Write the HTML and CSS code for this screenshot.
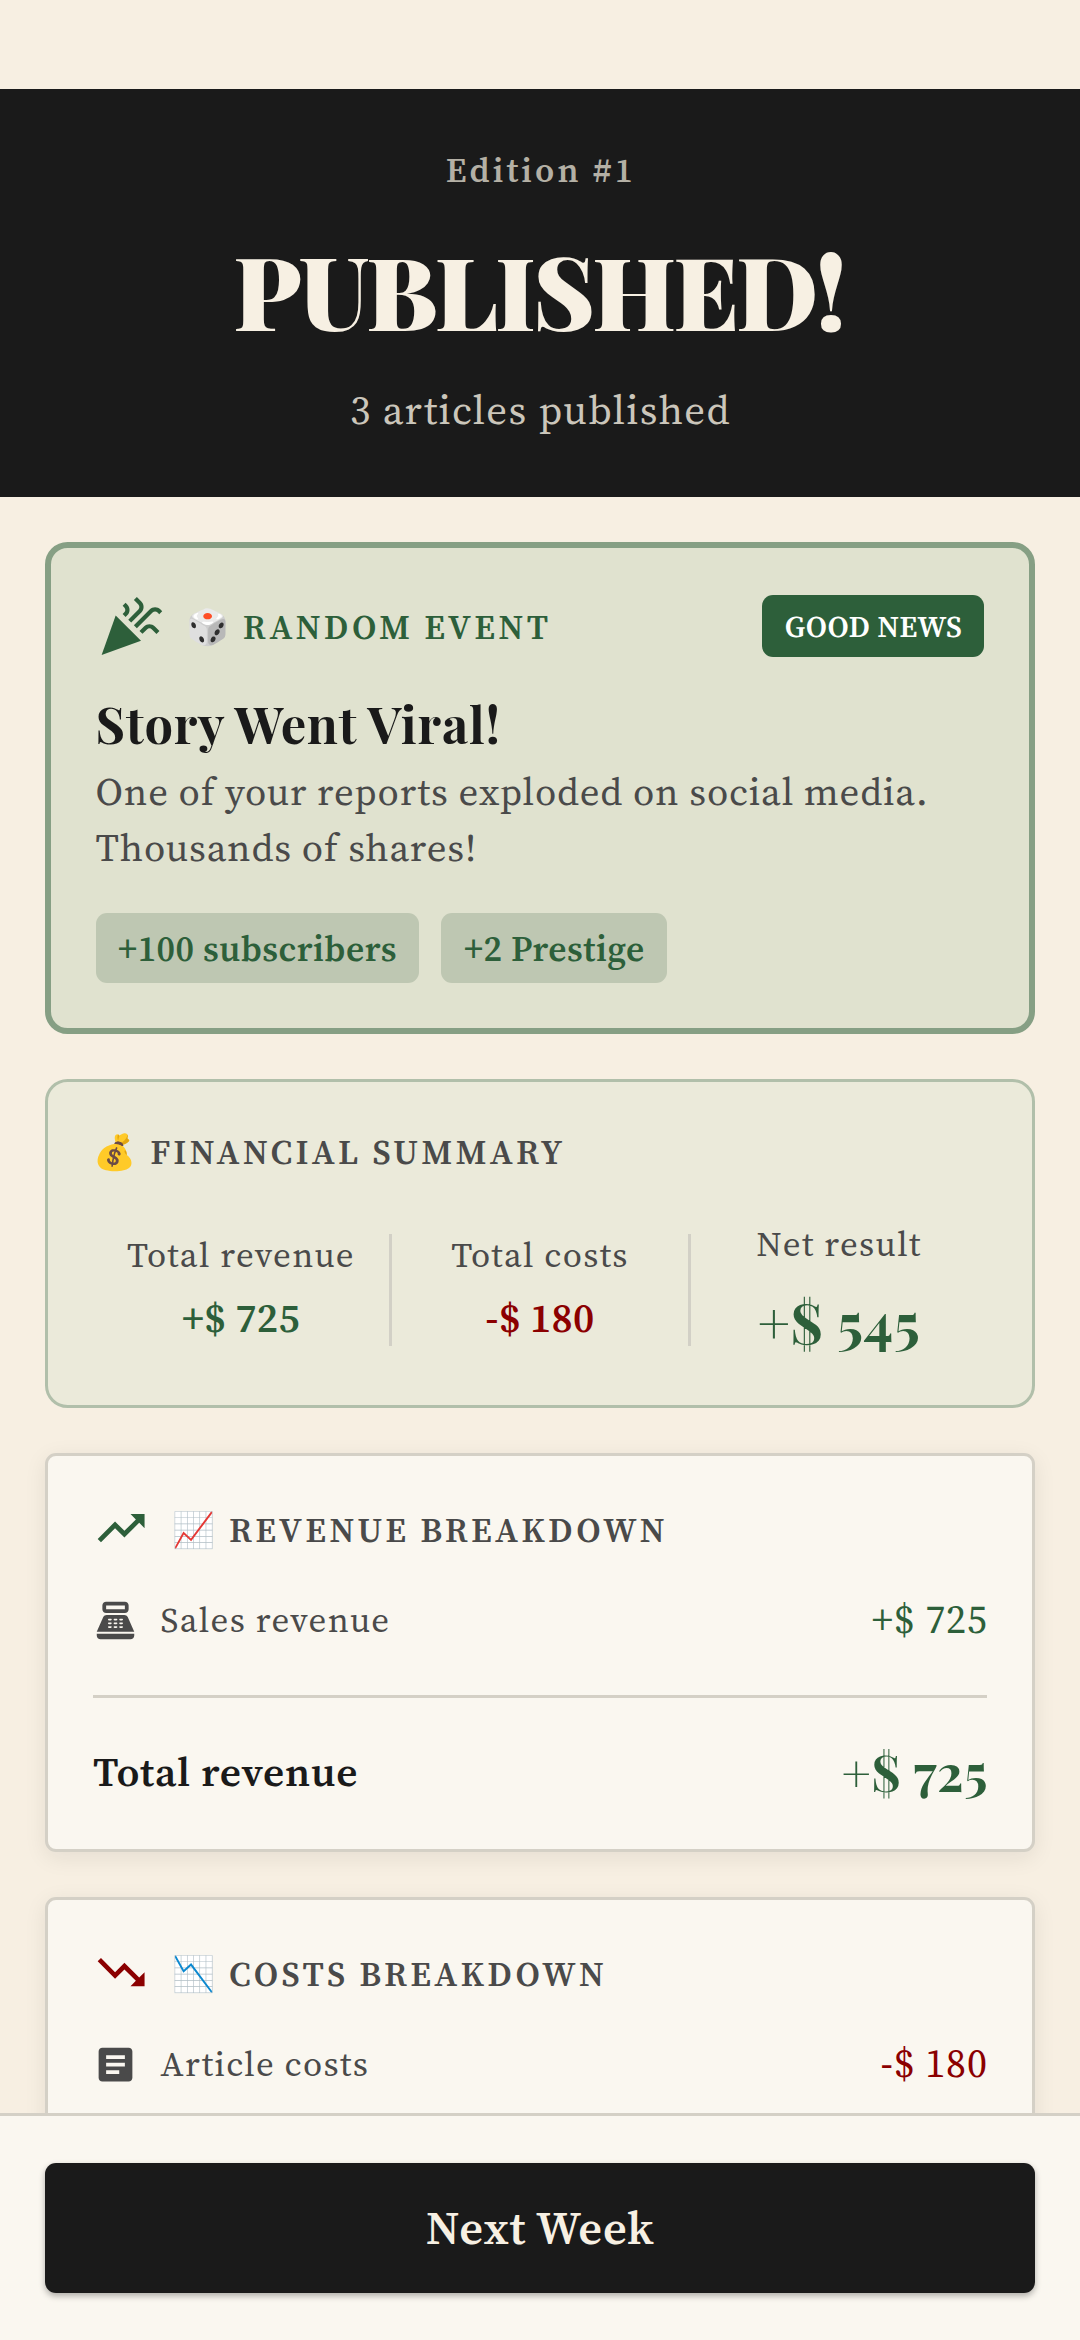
FILE: index.html
```html
<!DOCTYPE html>
<html lang="en">
<head>
<meta charset="utf-8">
<title>Edition #1 – Published!</title>
<link rel="stylesheet" href="styles.css">
</head>
<body>
<div class="app">
  <main class="scroll">
    <header class="masthead">
      <div class="edition">Edition #1</div>
      <h1 class="headline">PUBLISHED!</h1>
      <div class="count">3 articles published</div>
    </header>

    <section class="card event">
      <div class="event-top">
        <svg class="icon-event" viewBox="0 0 24 24" fill="currentColor"><path d="M2 22l14-5-9-9z"/><path d="M14.53 12.53l5.59-5.59c.49-.49 1.28-.49 1.77 0l.59.59 1.06-1.06-.59-.59c-1.07-1.07-2.82-1.07-3.89 0l-5.59 5.59 1.06 1.06z"/><path d="M10.06 6.88l-.59.59 1.06 1.06.59-.59c1.07-1.07 1.07-2.82 0-3.89l-.59-.59-1.06 1.07.59.59c.48.48.48 1.28 0 1.76z"/><path d="M17.06 11.88l-1.59 1.59 1.06 1.06 1.59-1.59c.49-.49 1.28-.49 1.77 0l1.61 1.61 1.06-1.06-1.61-1.61c-1.08-1.07-2.82-1.07-3.89 0z"/><path d="M15.06 5.88l-3.59 3.59 1.06 1.06 3.59-3.59c1.07-1.07 1.07-2.82 0-3.89l-1.59-1.59-1.06 1.06 1.59 1.59c.48.49.48 1.29 0 1.77z"/></svg>
        <h2 class="label positive">🎲 RANDOM EVENT</h2>
        <span class="badge">GOOD NEWS</span>
      </div>
      <h3 class="event-title">Story Went Viral!</h3>
      <p class="event-text">One of your reports exploded on social media. Thousands of shares!</p>
      <div class="chips">
        <span class="chip">+100 subscribers</span>
        <span class="chip">+2 Prestige</span>
      </div>
    </section>

    <section class="card summary">
      <h2 class="label">💰 FINANCIAL SUMMARY</h2>
      <div class="figures">
        <div class="figure">
          <span class="caption">Total revenue</span>
          <span class="amount semibold positive">+$ 725</span>
        </div>
        <i class="divider"></i>
        <div class="figure">
          <span class="caption">Total costs</span>
          <span class="amount semibold negative">-$ 180</span>
        </div>
        <i class="divider"></i>
        <div class="figure net">
          <span class="caption">Net result</span>
          <span class="net-amount positive">+$ 545</span>
        </div>
      </div>
    </section>

    <section class="card breakdown">
      <div class="breakdown-top">
        <svg class="icon-trend positive" viewBox="0 0 24 24" fill="currentColor"><path d="M16 6l2.29 2.29-4.88 4.88-4-4L2 16.59 3.41 18l6-6 4 4 6.3-6.29L22 12V6z"/></svg>
        <h2 class="label">📈 REVENUE BREAKDOWN</h2>
      </div>
      <div class="row">
        <svg class="icon-row" viewBox="0 0 24 24" fill="currentColor"><path d="M17 2H7c-1.1 0-2 .9-2 2v2c0 1.1.9 2 2 2h10c1.1 0 2-.9 2-2V4c0-1.1-.9-2-2-2zm0 4H7V4h10v2zm3 16H4c-1.1 0-2-.9-2-2v-1h20v1c0 1.1-.9 2-2 2zm-1.470-11.810C18.210 9.470 17.490 9 16.700 9H7.300c-.79 0-1.510.47-1.830 1.190L2 18h20l-3.470-7.810zM9.500 16h-1c-.28 0-.5-.22-.5-.5s.22-.5.5-.5h1c.28 0 .5.22.5.5s-.22.5-.5.5zm0-2h-1c-.28 0-.5-.22-.5-.5s.22-.5.5-.5h1c.28 0 .5.22.5.5s-.22.5-.5.5zm0-2h-1c-.28 0-.5-.22-.5-.5s.22-.5.5-.5h1c.28 0 .5.22.5.5s-.22.5-.5.5zm3 4h-1c-.28 0-.5-.22-.5-.5s.22-.5.5-.5h1c.28 0 .5.22.5.5s-.22.5-.5.5zm0-2h-1c-.28 0-.5-.22-.5-.5s.22-.5.5-.5h1c.28 0 .5.22.5.5s-.22.5-.5.5zm0-2h-1c-.28 0-.5-.22-.5-.5s.22-.5.5-.5h1c.28 0 .5.22.5.5s-.22.5-.5.5zm3 4h-1c-.28 0-.5-.22-.5-.5s.22-.5.5-.5h1c.28 0 .5.22.5.5s-.22.5-.5.5zm0-2h-1c-.28 0-.5-.22-.5-.5s.22-.5.5-.5h1c.28 0 .5.22.5.5s-.22.5-.5.5zm0-2h-1c-.28 0-.5-.22-.5-.5s.22-.5.5-.5h1c.28 0 .5.22.5.5s-.22.5-.5.5z"/></svg>
        <span class="caption row-name">Sales revenue</span>
        <span class="amount positive">+$ 725</span>
      </div>
      <div class="total">
        <span class="total-name">Total revenue</span>
        <span class="total-amount positive">+$ 725</span>
      </div>
    </section>

    <section class="card breakdown">
      <div class="breakdown-top">
        <svg class="icon-trend negative" viewBox="0 0 24 24" fill="currentColor"><path d="M16 18l2.29-2.29-4.88-4.88-4 4L2 7.41 3.41 6l6 6 4-4 6.3 6.29L22 12v6z"/></svg>
        <h2 class="label">📉 COSTS BREAKDOWN</h2>
      </div>
      <div class="row">
        <svg class="icon-row" viewBox="0 0 24 24" fill="currentColor"><path d="M19 3H5c-1.100 0-2 .9-2 2v14c0 1.100.9 2 2 2h14c1.100 0 2-.9 2-2V5c0-1.100-.9-2-2-2zm-5 14H7v-2h7v2zm3-4H7v-2h10v2zm0-4H7V7h10v2z"/></svg>
        <span class="caption row-name">Article costs</span>
        <span class="amount negative">-$ 180</span>
      </div>
    </section>
  </main>

  <footer class="footer">
    <button class="next" type="button">Next Week</button>
  </footer>
</div>
</body>
</html>
```
FILE: styles.css
```css
:root {
  --paper: #f7efe2;
  --cream: #f7f0e3;
  --surface: #faf7f0;
  --ink: #1a1a1a;
  --muted: #4a4a4a;
  --rule: #d4d0c6;
  --green: #2d5f3a;
  --red: #8b0000;
  --serif: "Source Serif 4", "Source Serif Pro", "Liberation Serif", serif;
  --display: "Playfair Display", "Liberation Serif", serif;
}

* { box-sizing: border-box; }

body {
  margin: 0;
  background: var(--paper);
  color: var(--muted);
  font-family: var(--serif);
}

h1, h2, h3, p { margin: 0; }
svg { display: block; flex: none; }

.app {
  width: 1080px;
  height: 2340px;
  display: flex;
  flex-direction: column;
  overflow: hidden;
}

.scroll {
  flex: 1;
  min-height: 0;
  overflow: hidden;
  padding-top: 89px;
}

.masthead {
  height: 407.500px;
  padding-top: 59px;
  background: var(--ink);
  color: var(--cream);
  text-align: center;
}
.edition {
  font-size: 34.600px;
  font-weight: 600;
  line-height: 45px;
  letter-spacing: 3.150px;
  text-indent: 1.500px;
  color: #b4b0a5;
}
.headline {
  margin-top: 34px;
  font-family: var(--display);
  font-size: 101.250px;
  font-weight: 900;
  line-height: 124px;
  letter-spacing: -2.850px;
  text-indent: -3px;
}
.count {
  margin-top: 31px;
  font-size: 40.800px;
  line-height: 56px;
  letter-spacing: 1.350px;
  text-indent: 1px;
  color: #cbc6bb;
}

.card {
  margin: 45px 45px 0;
  padding: 45px;
  border: 3px solid var(--rule);
  border-radius: 11px;
}

.label {
  padding-top: 2px;
  font-size: 34.600px;
  font-weight: 600;
  line-height: 48px;
  letter-spacing: 3.250px;
  white-space: nowrap;
}
.positive { color: var(--green); }
.negative { color: var(--red); }

.event {
  height: 492px;
  padding: 45px 44.600px 0;
  border: 6px solid #869f84;
  border-radius: 22.500px;
  background: #e0e2cf;
}
.event-top {
  display: flex;
  align-items: center;
  height: 67.500px;
}
.icon-event { width: 67.500px; height: 67.500px; color: var(--green); }
.event-top .label { margin-left: 22.500px; }
.badge {
  margin-left: auto;
  padding: 1px 22.200px 0 22.500px;
  border-radius: 11px;
  background: var(--green);
  color: #fff;
  font-size: 30.100px;
  font-weight: 600;
  line-height: 61px;
  letter-spacing: .300px;
}
.event-title {
  margin-top: 33px;
  font-family: var(--display);
  font-size: 50.625px;
  font-weight: 700;
  line-height: 60px;
  letter-spacing: .800px;
  color: var(--ink);
}
.event-text {
  margin-top: 11px;
  font-size: 38.800px;
  line-height: 56.250px;
  letter-spacing: .800px;
}
.chips {
  display: flex;
  gap: 22.500px;
  margin-top: 36.500px;
}
.chip {
  padding: 2px 22px 0 22.500px;
  border-radius: 11px;
  background: #bec7b2;
  color: var(--green);
  font-size: 35.500px;
  font-weight: 600;
  line-height: 68px;
  letter-spacing: .500px;
}

.summary {
  height: 329px;
  padding-top: 44px;
  padding-bottom: 0;
  border-color: #b1bfaa;
  border-radius: 22.500px;
  background: #ebeada;
}
.figures {
  display: flex;
  align-items: center;
  height: 140px;
  margin-top: 44.500px;
}
.figure {
  flex: 1;
  display: flex;
  flex-direction: column;
  align-items: center;
  gap: 11px;
  padding-bottom: 2.500px;
}
.figure.net { gap: 13px; padding-bottom: 0; }
.divider { width: 3px; height: 112px; background: #d2d0c6; }

.caption {
  font-size: 34.900px;
  line-height: 48px;
  letter-spacing: 1.350px;
}
.amount {
  font-size: 39.900px;
  line-height: 56px;
  letter-spacing: 1px;
}
.semibold { font-size: 40.800px; font-weight: 600; letter-spacing: .350px; }
.net-amount {
  font-family: var(--display);
  font-size: 56.250px;
  font-weight: 700;
  line-height: 79px;
  letter-spacing: .6px;
}

.breakdown {
  height: 399px;
  background: var(--surface);
  box-shadow: 0 5.600px 22.500px rgba(26, 26, 26, .08);
}
.breakdown-top {
  display: flex;
  align-items: center;
  gap: 22.500px;
  height: 56px;
}
.icon-trend { width: 56.250px; height: 56.250px; }
.row {
  display: flex;
  align-items: center;
  height: 56px;
  margin-top: 35.500px;
}
.icon-row { width: 45px; height: 45px; }
.row-name { margin: 0 auto 0 22.500px; }
.row .amount { margin: -2px -1px 0 0; }
.total {
  display: flex;
  align-items: center;
  justify-content: space-between;
  margin-top: 46.500px;
  padding-top: 42px;
  border-top: 3px solid var(--rule);
}
.total-name {
  font-size: 41.300px;
  font-weight: 600;
  letter-spacing: .900px;
  color: var(--ink);
}
.total-amount {
  margin-right: -1px;
  font-family: var(--display);
  font-size: 50.625px;
  font-weight: 700;
  line-height: 63px;
  letter-spacing: .6px;
}

.footer {
  flex: none;
  height: 227.500px;
  padding: 47px 45px 0;
  border-top: 3px solid var(--rule);
  background: var(--surface);
}
.next {
  display: block;
  width: 100%;
  height: 130px;
  padding: 0;
  border: 0;
  border-radius: 11px;
  background: var(--ink);
  box-shadow: 0 3px 6px rgba(0, 0, 0, .3);
  color: var(--cream);
  font-family: inherit;
  font-size: 46.400px;
  font-weight: 600;
  letter-spacing: .800px;
}
```
